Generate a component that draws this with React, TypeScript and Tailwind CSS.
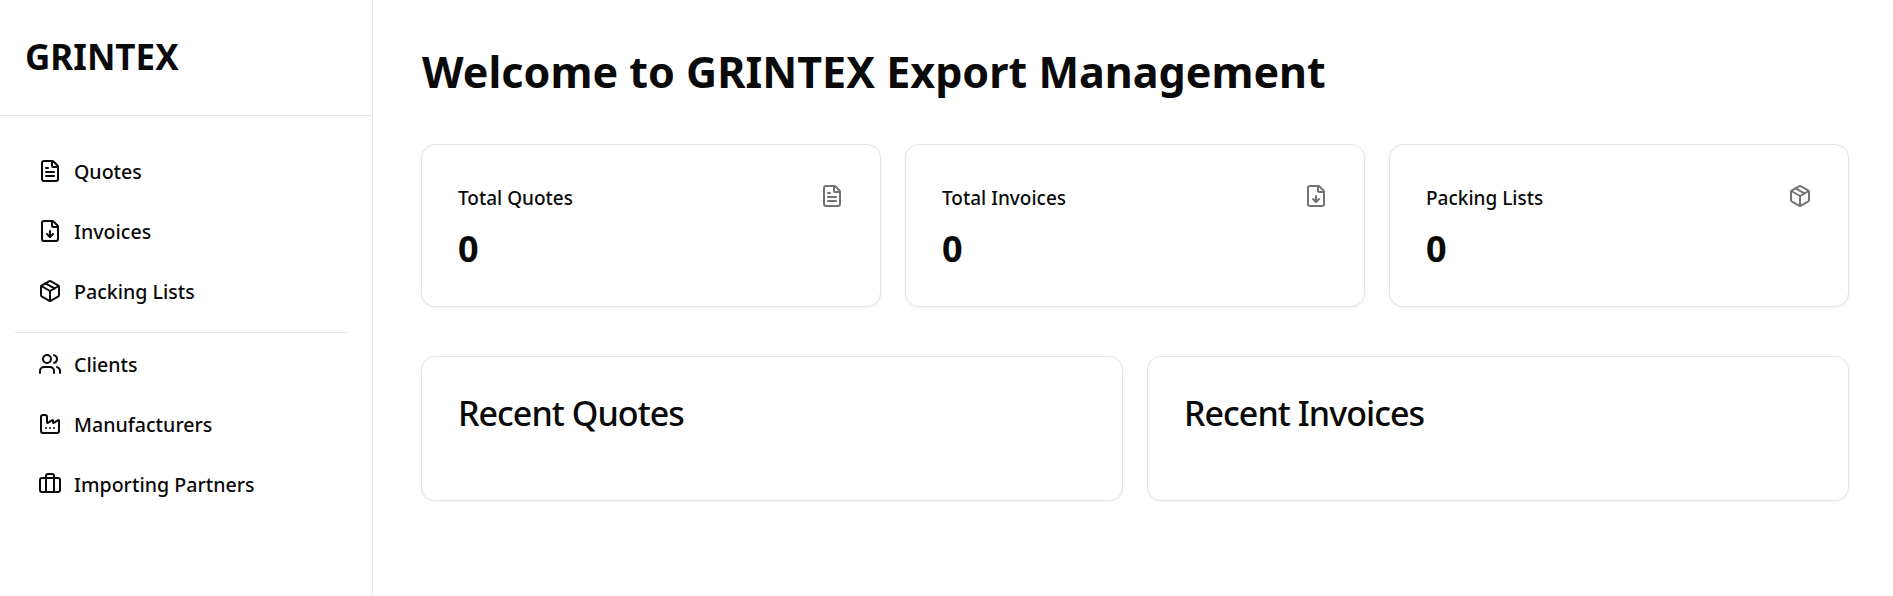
import { Briefcase, Factory, FileDown, FileText, Package, Users } from "lucide-react";

const NAV_TOP = [
  { label: "Quotes", icon: FileText },
  { label: "Invoices", icon: FileDown },
  { label: "Packing Lists", icon: Package },
];

const NAV_BOTTOM = [
  { label: "Clients", icon: Users },
  { label: "Manufacturers", icon: Factory },
  { label: "Importing Partners", icon: Briefcase },
];

const STATS = [
  { label: "Total Quotes", icon: FileText },
  { label: "Total Invoices", icon: FileDown },
  { label: "Packing Lists", icon: Package },
];

function NavLink({ label, icon: Icon }: { label: string; icon: React.ElementType }) {
  return (
    <a className="flex items-center gap-[12px] h-[60px] pl-[23px] text-[19.6px] font-medium text-[#0a0a0a]">
      <Icon className="w-[24px] h-[24px] shrink-0 -translate-y-[1px]" strokeWidth={2} aria-hidden />
      <span>{label}</span>
    </a>
  );
}

export default function App() {
  return (
    <div className="flex h-[596px] overflow-hidden bg-white text-[#0a0a0a] font-['Noto_Sans','Open_Sans',sans-serif]">
      {/* Sidebar */}
      <aside className="w-[373px] shrink-0 border-r border-[#e5e5e5]">
        <div className="h-[116px] border-b border-[#e5e5e5] px-[25px] pt-[33px]">
          <h1 className="text-[35px] leading-[48px] font-bold">GRINTEX</h1>
        </div>
        <nav className="px-[15px] pt-[26px]">
          {NAV_TOP.map((item) => (
            <NavLink key={item.label} {...item} />
          ))}
          <div className="mt-[10px] mb-[2px] h-px w-[333px] bg-[#e5e5e5]" />
          {NAV_BOTTOM.map((item) => (
            <NavLink key={item.label} {...item} />
          ))}
        </nav>
      </aside>

      {/* Main */}
      <main className="flex-1 pl-[48px] pr-[44px] pt-[43px]">
        <h2 className="ml-[1px] text-[43.05px] leading-[58px] font-bold">Welcome to GRINTEX Export Management</h2>

        <div className="mt-[43px] grid grid-cols-3 gap-[24px]">
          {STATS.map(({ label, icon: Icon }) => (
            <div key={label} className="h-[163px] rounded-[14px] border border-[#e5e5e5] bg-white shadow-[0_1px_3px_rgba(0,0,0,0.06)] px-[36px] pt-[38px]">
              <div className="flex items-start justify-between">
                <span className="pt-[1px] text-[19px] leading-[28px] font-medium">{label}</span>
                <Icon className="mt-[1px] w-[24px] h-[24px] text-[#737373]" strokeWidth={2} aria-hidden />
              </div>
              <p className="mt-[13px] text-[36px] leading-[48px] font-bold">0</p>
            </div>
          ))}
        </div>

        <div className="mt-[49px] grid grid-cols-2 gap-[24px]">
          {["Recent Quotes", "Recent Invoices"].map((title) => (
            <div key={title} className="h-[145px] rounded-[14px] border border-[#e5e5e5] bg-white shadow-[0_1px_3px_rgba(0,0,0,0.06)] px-[36px] pt-[36px]">
              <h3 className="text-[34px] leading-[40px] font-medium tracking-[-0.95px]">{title}</h3>
            </div>
          ))}
        </div>
      </main>
    </div>
  );
}
